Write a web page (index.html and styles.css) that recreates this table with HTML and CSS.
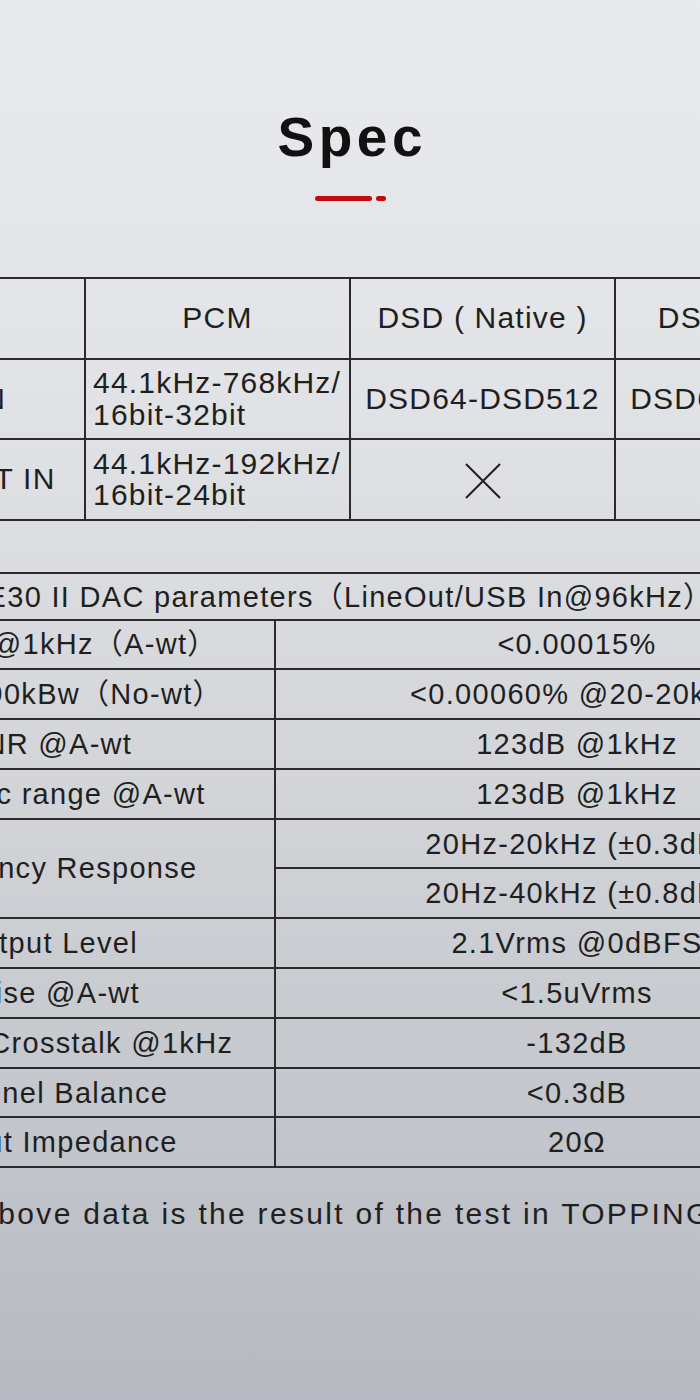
FILE: index.html
```html
<!DOCTYPE html>
<html lang="en">
<head>
<meta charset="utf-8">
<title>Spec</title>
<link rel="stylesheet" href="styles.css">
</head>
<body>
<main class="page">
  <h1 class="title">Spec</h1>
  <div class="accent"><span class="accent-bar"></span><span class="accent-dot"></span></div>

  <div class="clip clip-formats">
    <table class="formats">
      <colgroup><col class="fcol"><col class="fcol"><col class="fcol"><col class="fcol"></colgroup>
      <tr>
        <td></td>
        <td class="center">PCM</td>
        <td class="center">DSD ( Native )</td>
        <td class="center">DSD ( DoP )</td>
      </tr>
      <tr>
        <td class="center">USB IN</td>
        <td class="left">44.1kHz-768kHz/<br>16bit-32bit</td>
        <td class="center">DSD64-DSD512</td>
        <td class="center">DSD64-DSD256</td>
      </tr>
      <tr>
        <td class="center">COAX/OPT IN</td>
        <td class="left tight">44.1kHz-192kHz/<br>16bit-24bit</td>
        <td class="center"><svg class="cross" viewBox="0 0 36 36" aria-label="not supported"><path d="M1 1 L35 35 M35 1 L1 35"/></svg></td>
        <td class="center"><svg class="cross" viewBox="0 0 36 36" aria-label="not supported"><path d="M1 1 L35 35 M35 1 L1 35"/></svg></td>
      </tr>
    </table>
  </div>

  <div class="clip clip-params">
    <table class="params">
      <colgroup><col class="pcol-label"><col class="pcol-value"></colgroup>
      <tr class="caption-row"><td colspan="2">E30 II DAC parameters（LineOut/USB In@96kHz）</td></tr>
      <tr><td class="label">THD+N @1kHz（A-wt）</td><td>&lt;0.00015%</td></tr>
      <tr><td class="label">THD+N 90kBw（No-wt）</td><td>&lt;0.00060% @20-20kHz</td></tr>
      <tr><td class="label">SNR @A-wt</td><td>123dB @1kHz</td></tr>
      <tr><td class="label">Dynamic range @A-wt</td><td>123dB @1kHz</td></tr>
      <tr><td class="label" rowspan="2">Frequency Response</td><td>20Hz-20kHz (±0.3dB)</td></tr>
      <tr><td>20Hz-40kHz (±0.8dB)</td></tr>
      <tr><td class="label">Output Level</td><td>2.1Vrms @0dBFS</td></tr>
      <tr><td class="label">Noise @A-wt</td><td>&lt;1.5uVrms</td></tr>
      <tr><td class="label">Channel Crosstalk @1kHz</td><td>-132dB</td></tr>
      <tr><td class="label">Channel Balance</td><td>&lt;0.3dB</td></tr>
      <tr><td class="label">Output Impedance</td><td>20Ω</td></tr>
    </table>
  </div>

  <div class="clip clip-note">
    <p class="note">Above data is the result of the test in TOPPING lab.</p>
  </div>
</main>
</body>
</html>
```

FILE: styles.css
```css
html, body {
  margin: 0;
  padding: 0;
}

body {
  width: 700px;
  min-height: 1400px;
  background: linear-gradient(180deg, #e9eaed 0%, #e3e4e7 25%, #d3d5d9 55%, #c3c6cc 80%, #b6b9c1 100%);
  color: #1f1f1f;
  font-family: "Liberation Sans", "Noto Sans CJK SC", Arial, sans-serif;
  overflow: hidden;
}

.page {
  width: 700px;
  height: 1400px;
  display: flex;
  flex-direction: column;
  align-items: stretch;
}

.title {
  margin: 106px 0 0;
  height: 62px;
  font-size: 55px;
  line-height: 62px;
  font-weight: 700;
  letter-spacing: 4.5px;
  text-indent: 4.5px;
  text-align: center;
  color: #111;
}

.accent {
  margin-top: 28px;
  display: flex;
  justify-content: center;
  gap: 4px;
  height: 5px;
  padding-left: 1px;
}

.accent-bar {
  width: 57px;
  height: 5px;
  border-radius: 3px;
  background: #c4090f;
}

.accent-dot {
  width: 10px;
  height: 5px;
  border-radius: 3px;
  background: #c4090f;
}

.clip {
  width: 700px;
  overflow: hidden;
  display: flex;
  justify-content: center;
}

.clip-formats {
  margin-top: 76px;
}

.clip-params {
  margin-top: 51px;
}

table {
  flex: none;
  border-collapse: collapse;
  table-layout: fixed;
}

td {
  border: 2px solid #2b2b2b;
  padding: 0;
  color: #1f1f1f;
}

.formats {
  width: 1060px;
  font-size: 30px;
  letter-spacing: 1.2px;
}

.fcol {
  width: 265px;
}

.formats td {
  height: 78.5px;
  line-height: 32px;
}

.formats .center {
  text-align: center;
}

.formats .left {
  text-align: left;
  padding-left: 7px;
}

.formats .tight {
  line-height: 31px;
}

.cross {
  display: block;
  width: 36px;
  height: 36px;
  margin: 3px auto 0;
}

.cross path {
  stroke: #1f1f1f;
  stroke-width: 2;
  fill: none;
}

.params {
  width: 1058px;
  font-size: 29px;
  letter-spacing: 1.3px;
}

.pcol-label {
  width: 454px;
}

.pcol-value {
  width: 604px;
}

.params td {
  height: 47.8px;
  line-height: 30px;
  text-align: center;
}

.params .caption-row td {
  height: 44px;
  padding-top: 1px;
}

.clip-note {
  margin-top: 26px;
}

.note {
  flex: none;
  width: 960px;
  margin: 0;
  padding-left: 56px;
  font-size: 30px;
  line-height: 40px;
  letter-spacing: 2.3px;
  text-align: center;
  color: #1f1f1f;
}
```
